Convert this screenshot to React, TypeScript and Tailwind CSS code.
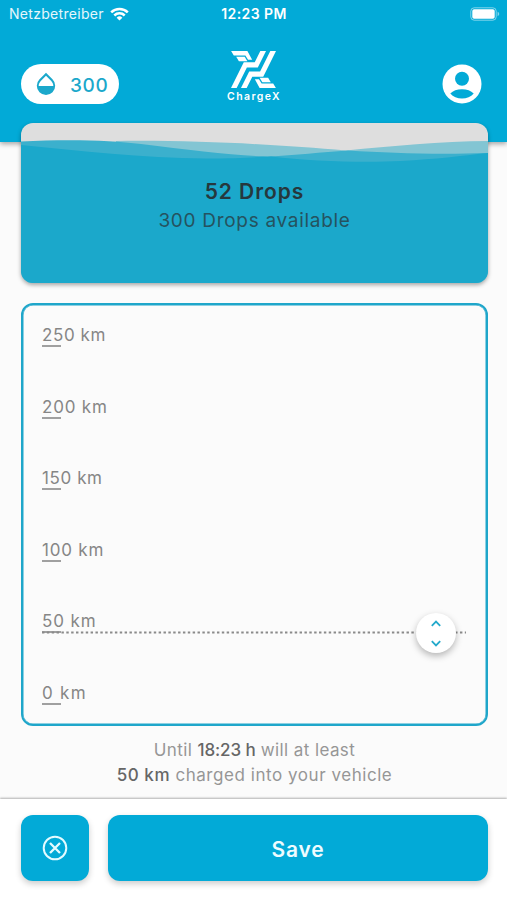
import React from "react";

const marks = [
  { label: "250 km", cls: "tracking-[0.6px]" },
  { label: "200 km", cls: "tracking-[0.8px]" },
  { label: "150 km", cls: "tracking-[0.6px]" },
  { label: "100 km", cls: "tracking-[0.8px]" },
  { label: "50 km", cls: "tracking-[0.9px]" },
  { label: "0 km", cls: "tracking-[1.3px]" },
];

function StatusBar() {
  return (
    <div className="grid h-7 grid-cols-3 items-center pr-[7px] pl-[9px] text-[14px] leading-none text-white">
      <div className="flex items-center gap-[6px]">
        <span className="tracking-[0.3px] text-white/90">Netzbetreiber</span>
        <svg width="19" height="14" viewBox="0 0 19 14" fill="none" stroke="white" strokeWidth="2.5">
          <path d="M1.2 5.4a11.8 11.8 0 0 1 16.6 0" />
          <path d="M4.3 8.5a7.4 7.4 0 0 1 10.4 0" />
          <path d="M9.5 13.6 6.6 10.7a4.1 4.1 0 0 1 5.8 0z" fill="white" stroke="none" />
        </svg>
      </div>
      <div className="mr-[1px] text-center font-semibold tracking-[0.4px] whitespace-nowrap">12:23 PM</div>
      <svg className="justify-self-end" width="30" height="14" viewBox="0 0 30 14">
        <rect x="0.8" y="0.8" width="25.4" height="12.4" rx="3.4" fill="none" stroke="white" strokeOpacity="0.5" />
        <rect x="2.3" y="2.3" width="22.4" height="9.4" rx="1.8" fill="white" />
        <path d="M27.6 4.8v4.4c1-.4 1.6-1.2 1.6-2.2s-.6-1.8-1.6-2.2z" fill="white" fillOpacity="0.5" />
      </svg>
    </div>
  );
}

function Logo() {
  return (
    <div className="flex flex-col items-center">
      <svg width="45" height="37" viewBox="51 32 132 109" fill="none" stroke="white" strokeWidth="15">
        <path d="M148 27 125 73H93L56 147" />
        <path d="M86 146 109 100H141L178 26" />
        <g fill="white" stroke="none">
          <path d="M51 32H99L113 58H101L93 45H59z" />
          <path d="M66 49H91L99 62H74z" />
          <path d="M183 141H135L121 115H133L141 128H175z" />
          <path d="M168 124H143L135 111H160z" />
        </g>
      </svg>
      <span className="mt-[2px] mr-[-1px] text-[10.5px] leading-[13px] font-semibold tracking-[1.4px] text-white">ChargeX</span>
    </div>
  );
}

function Header() {
  return (
    <header className="h-[142px] bg-[#02aad7] shadow-[0_2px_5px_rgba(0,0,0,0.35)]">
      <StatusBar />
      <div className="grid grid-cols-3 items-start px-[21px] pt-[23px]">
        <div className="mt-[13px] flex h-10 w-[98px] items-center rounded-full bg-white pl-[15px] text-[#1ba8cb]">
          <svg width="20" height="24" viewBox="0 0 20 24" fill="currentColor">
            <path fillRule="evenodd" d="M10 .8 16.5 7.3A9.2 9.2 0 1 1 3.5 7.3zM10 3.7 5 8.7C3.5 10.2 2.7 12 2.7 14h14.6c0-2-.8-3.8-2.3-5.3z" />
          </svg>
          <span className="mt-[4px] ml-[14px] text-[19px] font-medium tracking-[0.6px]">300</span>
        </div>
        <Logo />
        <svg className="mt-[13px] mr-[4px] justify-self-end" width="40" height="40" viewBox="0 0 40 40">
          <circle cx="20" cy="20" r="19.5" fill="white" />
          <circle cx="20" cy="14.8" r="7" fill="#02aad7" />
          <path d="M8.3 29.6C11 26.7 15 25.3 20 25.3s9 1.4 11.7 4.3c-2.8 3.2-7 5-11.7 5s-8.9-1.8-11.7-5z" fill="#02aad7" />
        </svg>
      </div>
    </header>
  );
}

function DropsCard() {
  return (
    <section className="relative -mt-[19px] h-[160px] overflow-hidden rounded-[12px] bg-[#dedede] shadow-[0_2px_4px_rgba(0,0,0,0.35)]">
      <svg className="absolute inset-0" width="467" height="160" viewBox="0 0 467 160">
        <path fill="#83c5d3" d="M95 18C180 17 260 22 325 27.500C370 23 420 18.500 467 18V40H95z" />
        <path fill="#3bb0cd" d="M0 18.500C45 16 90 17 120 21C170 27 215 33 247 33.500C275 32.500 300 29 327 27.500C370 30 415 32 467 30V160H0z" />
        <path fill="#1ba8cb" d="M0 22C60 28 120 35 185 35.500C215 35.500 235 34 250 33.500C290 38 340 40 380 38C415 36 440 33 467 30V160H0z" />
      </svg>
      <div className="relative flex flex-col items-center pt-[54px]">
        <p className="text-[21px] leading-[29px] font-semibold tracking-[0.95px] text-[#26383d]">52 Drops</p>
        <p className="pt-px text-[19px] leading-[28px] tracking-[0.7px] text-[#25535f]">300 Drops available</p>
      </div>
    </section>
  );
}

function RangePanel() {
  return (
    <section className="relative mt-5 flex h-[423px] flex-col justify-between rounded-[12px] border-2 border-[#1fa6ca] px-[19px] pt-[19px] pb-[19px] shadow-[inset_0_0_0_0.5px_#1fa6ca]">
      {marks.map((m) => (
        <div key={m.label} className="flex flex-col text-[#868686]">
          <span className={"h-[21px] text-[17px] leading-[22px] " + m.cls}>{m.label}</span>
          <span className="h-[2px] w-[19px] bg-[#a0a0a0]" />
        </div>
      ))}
      <svg className="absolute top-[326px] left-[19px]" width="424" height="3" viewBox="0 0 424 3">
        <path d="M0 1.5H424" stroke="#8a8a8a" strokeWidth="2" strokeDasharray="2.43 2.43" />
      </svg>
      <div className="absolute top-[308px] left-[393px] flex size-10 flex-col items-center justify-center gap-[13px] rounded-full bg-white shadow-[0_3px_7px_rgba(0,0,0,0.28)]">
        <svg width="10" height="7" viewBox="0 0 10 7" fill="none" stroke="#23a9cb" strokeWidth="1.8">
          <path d="M.8 5.8 5 1.6l4.2 4.2" />
        </svg>
        <svg width="10" height="7" viewBox="0 0 10 7" fill="none" stroke="#23a9cb" strokeWidth="1.8">
          <path d="M.8 1.2 5 5.4l4.2-4.2" />
        </svg>
      </div>
    </section>
  );
}

function Footer() {
  return (
    <footer className="flex h-[101px] gap-[19px] bg-white pt-4 pr-[19px] pl-[21px] shadow-[0_-1px_2px_rgba(0,0,0,0.3)]">
      <button className="flex h-[66px] w-[68px] items-center justify-center rounded-[12px] bg-[#02aad7] shadow-[0_3px_6px_rgba(0,0,0,0.2)]">
        <svg width="26" height="26" viewBox="0 0 26 26" fill="none" stroke="#e4fbff" strokeWidth="2">
          <circle cx="13" cy="13" r="11.3" />
          <path d="m8 8 10 10M18 8 8 18" strokeWidth="2.3" />
        </svg>
      </button>
      <button className="h-[66px] flex-1 rounded-[12px] bg-[#02aad7] pt-[3px] text-[21px] font-semibold tracking-[0.8px] text-[#eefcff] shadow-[0_3px_6px_rgba(0,0,0,0.2)]">
        Save
      </button>
    </footer>
  );
}

export default function App() {
  return (
    <div className="flex h-[900px] w-[507px] flex-col overflow-hidden bg-[#fbfbfb] font-['Inter',sans-serif]">
      <Header />
      <main className="flex-1 pr-[19px] pl-[21px]">
        <DropsCard />
        <RangePanel />
        <div className="mt-[12px] text-center text-[17px] leading-[25px] text-[#969696]">
          <p className="tracking-[0.4px]">
            Until <b className="font-medium tracking-[-0.1px] text-[#666]">18:23 h</b> will at least
          </p>
          <p className="tracking-[0.55px]">
            <b className="font-medium text-[#666]">50 km</b> charged into your vehicle
          </p>
        </div>
      </main>
      <Footer />
    </div>
  );
}
